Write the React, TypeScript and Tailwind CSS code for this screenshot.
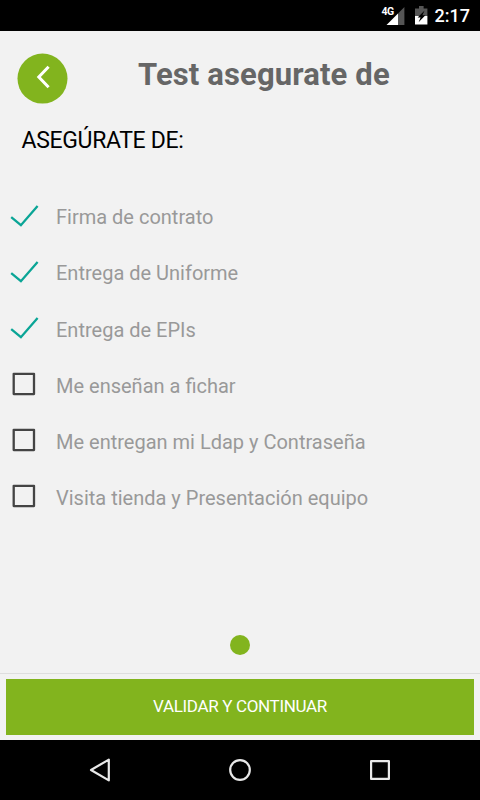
type ChecklistItem = {
  label: string;
  done: boolean;
};

const items: ChecklistItem[] = [
  { label: "Firma de contrato", done: true },
  { label: "Entrega de Uniforme", done: true },
  { label: "Entrega de EPIs", done: true },
  { label: "Me enseñan a fichar", done: false },
  { label: "Me entregan mi Ldap y Contraseña", done: false },
  { label: "Visita tienda y Presentación equipo", done: false },
];

function StatusBar() {
  return (
    <div className="flex h-[31px] shrink-0 items-center justify-end bg-black pr-[10px] text-white">
      <div className="flex items-start">
        <span className="mt-px w-[12px] text-[10.5px] leading-[10px] font-bold tracking-[-0.5px]">4G</span>
        <svg className="-ml-[8px] mt-[1px] h-[18px] w-[19px]" viewBox="0 0 19 18">
          <path d="M12 6.4 18.4 0V18H12Z" fill="#555" />
          <path d="M.5 18 12 6.4V18Z" fill="#fff" />
        </svg>
      </div>
      <svg className="ml-[10px] h-[19px] w-[13px]" viewBox="0 0 13 19">
        <path d="M0 2.4H4V0H8.6V2.4H12.4V10H0Z" fill="#555" />
        <path d="M0 10H12.4V18.5H0Z" fill="#fff" />
        <path d="M9.6 4.4 2.6 11.4H5.6L3.6 16.2 10.4 9.2H7.4Z" fill="#000" />
      </svg>
      <span className="ml-[7px] text-[18px] leading-[18px] font-medium">2:17</span>
    </div>
  );
}

function Header() {
  return (
    <header className="flex h-[84px] shrink-0 items-start pl-[17px] pt-[22px]">
      <button className="size-[51px] shrink-0" aria-label="Volver">
        <svg className="size-[51px]" viewBox="0 0 51 51" fill="none" stroke="#fff" strokeWidth="3">
          <circle cx="25.5" cy="25.6" r="25" fill="#82b41e" stroke="none" />
          <path d="M31.6 13.8 21.8 24 31.6 34.2" />
        </svg>
      </button>
      <h1 className="ml-[70px] mt-[4px] text-[31px] leading-[36px] font-bold tracking-[0.13px] whitespace-nowrap text-[#666]">
        Test asegurate de
      </h1>
    </header>
  );
}

function CheckMark({ done }: { done: boolean }) {
  if (done) {
    return (
      <svg className="mt-[3px] h-[24px] w-[30px]" viewBox="0 0 30 24" fill="none" stroke="#0aa596" strokeWidth="2.3">
        <path d="M1.2 12.2 10.9 20.2 27.6 1.1" />
      </svg>
    );
  }
  return (
    <svg className="ml-[2px] size-[24px]" viewBox="0 0 24 24" fill="none" stroke="#444" strokeWidth="2.3" strokeLinejoin="round">
      <rect x="1.7" y="1.8" width="20.3" height="20.3" />
    </svg>
  );
}

function Checklist() {
  return (
    <ul className="mt-[32px] grow">
      {items.map((item) => (
        <li key={item.label} className="flex h-[56.25px] items-center pl-[10px]">
          <div className="flex w-[46px] items-center">
            <CheckMark done={item.done} />
          </div>
          <span className="mt-[4px] text-[20px] leading-[24px] whitespace-nowrap text-[#999]">{item.label}</span>
        </li>
      ))}
    </ul>
  );
}

function NavBar() {
  return (
    <nav className="flex h-[60px] shrink-0 items-center justify-center gap-[108px] bg-black">
      <svg className="size-8" viewBox="0 0 32 32" fill="none" stroke="#e8e8e8" strokeWidth="2.2" strokeLinejoin="round">
        <path d="M7 16 24.8 5.6V26.4Z" />
      </svg>
      <svg className="size-8" viewBox="0 0 32 32" fill="none" stroke="#e8e8e8" strokeWidth="2.2">
        <circle cx="16" cy="16" r="9.8" />
      </svg>
      <svg className="size-8" viewBox="0 0 32 32" fill="none" stroke="#e8e8e8" strokeWidth="2.2" strokeLinejoin="round">
        <rect x="7.1" y="7.1" width="17.8" height="17.8" />
      </svg>
    </nav>
  );
}

export default function App() {
  return (
    <div className="flex h-[800px] w-[480px] flex-col overflow-hidden bg-[#f2f2f2] font-['Roboto',sans-serif]">
      <StatusBar />
      <Header />
      <main className="flex grow flex-col">
        <h2 className="mt-[10px] pt-px pl-[21.5px] text-[23px] leading-[29px] tracking-[-0.33px] whitespace-nowrap text-black">
          ASEGÚRATE DE:
        </h2>
        <Checklist />
        <div className="mb-[18px] size-[20px] self-center rounded-full bg-[#82b41e]" />
      </main>
      <footer className="h-[67px] shrink-0 border-t border-[#dedede] px-[6px] pt-[5px]">
        <button className="h-[56px] w-full bg-[#82b41e] text-[17px] tracking-[-0.34px] text-white">
          VALIDAR Y CONTINUAR
        </button>
      </footer>
      <NavBar />
    </div>
  );
}
